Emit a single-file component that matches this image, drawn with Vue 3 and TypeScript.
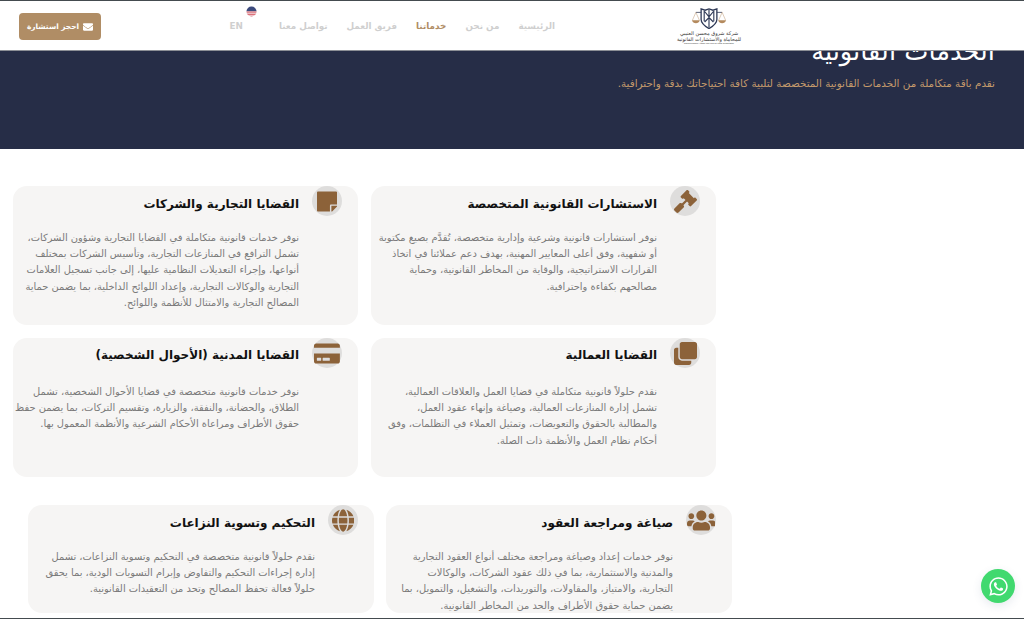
<template>
  <div class="page" dir="rtl">
    <header class="topbar">
      <div class="logo">
        <svg class="logo-mark" viewBox="0 0 40 24" aria-hidden="true">
          <path d="M5 5h30" stroke="#2f3a57" stroke-width=".9" fill="none" />
          <path d="M1 14l4-9 4 9M31 14l4-9 4 9" stroke="#b48a5e" stroke-width=".5" fill="none" />
          <path d="M.5 14h9c-1 4.5-8 4.5-9 0zM30.500 14h9c-1 4.500-8 4.500-9 0z" fill="#b48a5e" />
          <path d="M11 1l4.500 1.500L20 1l4.500 1.500L29 1v12c0 5-5 8-9 10.500C16 21 11 18 11 13z" fill="#fff" stroke="#2f3a57" stroke-width="1.500" />
          <path d="M14.500 3v12M25.500 3v12M20 2v20M15 4l5 6 5-6M15 16l5-5 5 5" stroke="#2f3a57" stroke-width="1.300" fill="none" />
        </svg>
        <span class="logo-line">شركة شروق محسن العنيبي</span>
        <span class="logo-line">للمحاماة والاستشارات القانونية</span>
        <span class="logo-tiny" dir="ltr">Shrouq Mohsen Alotaibi Law Firm for Legal Consultation</span>
      </div>
      <nav class="nav">
        <a v-for="link in links" :key="link.label" class="nav-link" :class="{ active: link.active }">{{ link.label }}</a>
        <a class="nav-link lang" dir="ltr">
          EN
          <svg class="flag" viewBox="0 0 12 12" aria-hidden="true">
            <clipPath id="flagClip"><circle cx="6" cy="6" r="5.5" /></clipPath>
            <g clip-path="url(#flagClip)">
              <rect width="12" height="12" fill="#f4f1f1" />
              <rect y="6" width="12" height="1.2" fill="#d8525f" />
              <rect y="8.4" width="12" height="1.2" fill="#d8525f" />
              <rect y="10.6" width="12" height="1.2" fill="#d8525f" />
              <rect width="12" height="5.6" fill="#3b4a7d" />
            </g>
          </svg>
        </a>
      </nav>
      <a class="cta">
        <svg class="cta-icon" viewBox="0 0 512 512" aria-hidden="true">
          <path d="M502.3 190.8c3.9-3.1 9.7-.2 9.7 4.7V400c0 26.5-21.5 48-48 48H48c-26.5 0-48-21.5-48-48V195.6c0-5 5.7-7.8 9.7-4.7 22.4 17.4 52.1 39.5 154.1 113.6 21.1 15.4 56.7 47.8 92.2 47.6 35.7.3 72-32.8 92.3-47.6 102-74.1 131.6-96.3 154-113.7zM256 320c23.2.4 56.6-29.2 73.4-41.4 132.7-96.3 142.8-104.7 173.4-128.7 5.8-4.5 9.2-11.5 9.2-18.9v-19c0-26.5-21.5-48-48-48H48C21.5 64 0 85.5 0 112v19c0 7.4 3.4 14.3 9.2 18.9 30.6 23.9 40.7 32.4 173.4 128.7 16.8 12.2 50.2 41.8 73.4 41.4z" />
        </svg>
        احجز استشارة
      </a>
    </header>

    <section class="hero">
      <h1>الخدمات القانونية</h1>
      <p>نقدم باقة متكاملة من الخدمات القانونية المتخصصة لتلبية كافة احتياجاتك بدقة واحترافية.</p>
    </section>

    <main class="services">
      <div v-for="(row, r) in rows" :key="r" class="row" :class="`row-${r + 1}`">
        <article v-for="card in row" :key="card.title" class="card">
          <div class="card-head">
            <span class="icon-wrap">
              <svg class="icon" :viewBox="card.box" aria-hidden="true"><path :d="card.icon" /></svg>
            </span>
            <h3>{{ card.title }}</h3>
          </div>
          <p class="card-text">
            <span v-for="line in card.lines" :key="line">{{ line }}</span>
          </p>
        </article>
      </div>
    </main>

    <a class="whatsapp">
      <svg viewBox="0 0 448 512" aria-hidden="true">
        <path d="M380.9 97.1C339 55.1 283.2 32 223.9 32c-122.4 0-222 99.6-222 222 0 39.1 10.2 77.3 29.6 111L0 480l117.7-30.9c32.4 17.7 68.9 27 106.1 27h.1c122.3 0 224.1-99.6 224.1-222 0-59.3-25.2-115-67.1-157zm-157 341.6c-33.2 0-65.7-8.9-94-25.7l-6.7-4-69.8 18.3L72 359.2l-4.4-7c-18.5-29.4-28.2-63.3-28.2-98.2 0-101.7 82.8-184.5 184.6-184.5 49.3 0 95.6 19.2 130.4 54.1 34.8 34.9 56.2 81.2 56.1 130.5 0 101.8-84.9 184.6-186.6 184.6zm101.2-138.2c-5.5-2.8-32.8-16.2-37.9-18-5.1-1.9-8.8-2.8-12.5 2.8-3.7 5.6-14.3 18-17.6 21.8-3.2 3.7-6.5 4.2-12 1.4-32.6-16.3-54-29.1-75.5-66-5.7-9.8 5.7-9.1 16.3-30.3 1.8-3.7.9-6.9-.5-9.7-1.4-2.8-12.5-30.1-17.1-41.2-4.5-10.8-9.1-9.3-12.5-9.5-3.2-.2-6.9-.2-10.6-.2-3.7 0-9.7 1.4-14.8 6.9-5.1 5.6-19.4 19-19.4 46.3 0 27.3 19.9 53.7 22.6 57.4 2.8 3.7 39.1 59.7 94.8 83.8 35.2 15.2 49 16.5 66.6 13.9 10.7-1.6 32.8-13.4 37.4-26.4 4.6-13 4.6-24.1 3.2-26.4-1.3-2.5-5-3.9-10.5-6.6z" />
      </svg>
    </a>
  </div>
</template>

<script setup lang="ts">
interface Card {
  title: string;
  box: string;
  icon: string;
  lines: string[];
}

const links = [
  { label: 'الرئيسية', active: false },
  { label: 'من نحن', active: false },
  { label: 'خدماتنا', active: true },
  { label: 'فريق العمل', active: false },
  { label: 'تواصل معنا', active: false },
];

const gavel = 'M504.971 199.362l-22.627-22.627c-9.373-9.373-24.569-9.373-33.941 0l-5.657 5.657L329.608 69.255l5.657-5.657c9.373-9.373 9.373-24.569 0-33.941L312.638 7.029c-9.373-9.373-24.569-9.373-33.941 0L154.246 131.48c-9.373 9.373-9.373 24.569 0 33.941l22.627 22.627c9.373 9.373 24.569 9.373 33.941 0l5.657-5.657 39.598 39.598-81.04 81.04-5.657-5.657c-12.497-12.497-32.758-12.497-45.255 0L9.373 412.118c-12.497 12.497-12.497 32.758 0 45.255l45.255 45.255c12.497 12.497 32.758 12.497 45.255 0l114.745-114.745c12.497-12.497 12.497-32.758 0-45.255l-5.657-5.657 81.04-81.04 39.598 39.598-5.657 5.657c-9.373 9.373-9.373 24.569 0 33.941l22.627 22.627c9.373 9.373 24.569 9.373 33.941 0l124.451-124.451c9.372-9.372 9.372-24.568 0-33.941z';
const note = 'M312 320h136V56c0-13.3-10.7-24-24-24H24C10.7 32 0 42.7 0 56v400c0 13.3 10.7 24 24 24h264V344c0-13.2 10.8-24 24-24zm129 55l-98 98c-4.5 4.5-10.6 7-17 7h-6V352h128v6.1c0 6.3-2.5 12.4-7 16.9z';
const clone = 'M464 0c26.51 0 48 21.49 48 48v288c0 26.51-21.49 48-48 48H176c-26.51 0-48-21.49-48-48V48c0-26.51 21.49-48 48-48h288M176 416c-44.112 0-80-35.888-80-80V128H48c-26.51 0-48 21.49-48 48v288c0 26.51 21.49 48 48 48h288c26.51 0 48-21.49 48-48v-48H176z';
const creditCard = 'M0 432c0 26.5 21.5 48 48 48h480c26.5 0 48-21.5 48-48V256H0v176zm192-68c0-6.6 5.4-12 12-12h136c6.6 0 12 5.4 12 12v40c0 6.6-5.4 12-12 12H204c-6.6 0-12-5.4-12-12v-40zm-128 0c0-6.6 5.4-12 12-12h72c6.6 0 12 5.4 12 12v40c0 6.6-5.4 12-12 12H76c-6.6 0-12-5.4-12-12v-40zM576 80v48H0V80c0-26.5 21.5-48 48-48h480c26.5 0 48 21.5 48 48z';
const users = 'M96 224c35.3 0 64-28.7 64-64s-28.7-64-64-64-64 28.7-64 64 28.7 64 64 64zm448 0c35.3 0 64-28.7 64-64s-28.7-64-64-64-64 28.7-64 64 28.7 64 64 64zm32 32h-64c-17.6 0-33.5 7.1-45.1 18.6 40.3 22.1 68.9 62 75.1 109.4h66c17.7 0 32-14.3 32-32v-32c0-35.3-28.7-64-64-64zm-256 0c61.9 0 112-50.1 112-112S381.9 32 320 32 208 82.1 208 144s50.1 112 112 112zm76.8 32h-8.3c-20.8 10-43.9 16-68.5 16s-47.6-6-68.5-16h-8.3C179.6 288 128 339.6 128 403.2V432c0 26.5 21.5 48 48 48h288c26.5 0 48-21.5 48-48v-28.8c0-63.6-51.6-115.2-115.2-115.2zm-223.7-13.4C161.5 263.1 145.6 256 128 256H64c-35.3 0-64 28.7-64 64v32c0 17.7 14.3 32 32 32h65.9c6.3-47.4 34.9-87.3 75.2-109.4z';
const globe = 'M336.5 160C322 70.7 287.8 8 248 8s-74 62.7-88.5 152h177zM152 256c0 22.2 1.2 43.5 3.3 64h185.3c2.1-20.5 3.3-41.8 3.3-64s-1.2-43.5-3.3-64H155.3c-2.1 20.5-3.3 41.8-3.3 64zm324.7-96c-28.6-67.9-86.5-120.4-158-141.6 24.4 33.8 41.2 84.7 50 141.6h108zM177.2 18.4C105.8 39.6 47.8 92.1 19.3 160h108c8.7-56.9 25.5-107.8 49.9-141.6zM487.4 192H372.7c2.1 21 3.3 42.5 3.3 64s-1.2 43-3.3 64h114.6c5.5-20.5 8.6-41.8 8.6-64s-3.1-43.5-8.5-64zM120 256c0-21.5 1.2-43 3.3-64H8.6C3.2 212.5 0 233.8 0 256s3.2 43.5 8.6 64h114.6c-2-21-3.2-42.5-3.2-64zm39.5 96c14.5 89.3 48.7 152 88.5 152s74-62.7 88.5-152h-177zm159.3 141.6c71.4-21.2 129.4-73.7 158-141.6h-108c-8.8 56.9-25.6 107.8-50 141.6zM19.3 352c28.6 67.9 86.5 120.4 158 141.6-24.4-33.8-41.2-84.7-50-141.6h-108z';

const rows: Card[][] = [
  [
    {
      title: 'الاستشارات القانونية المتخصصة',
      box: '0 0 512 512',
      icon: gavel,
      lines: [
        'نوفر استشارات قانونية وشرعية وإدارية متخصصة، تُقدَّم بصيغ مكتوبة',
        'أو شفهية، وفق أعلى المعايير المهنية، بهدف دعم عملائنا في اتخاذ',
        'القرارات الاستراتيجية، والوقاية من المخاطر القانونية، وحماية',
        'مصالحهم بكفاءة واحترافية.',
      ],
    },
    {
      title: 'القضايا التجارية والشركات',
      box: '0 0 448 512',
      icon: note,
      lines: [
        'نوفر خدمات قانونية متكاملة في القضايا التجارية وشؤون الشركات،',
        'تشمل الترافع في المنازعات التجارية، وتأسيس الشركات بمختلف',
        'أنواعها، وإجراء التعديلات النظامية عليها، إلى جانب تسجيل العلامات',
        'التجارية والوكالات التجارية، وإعداد اللوائح الداخلية، بما يضمن حماية',
        'المصالح التجارية والامتثال للأنظمة واللوائح.',
      ],
    },
  ],
  [
    {
      title: 'القضايا العمالية',
      box: '0 0 512 512',
      icon: clone,
      lines: [
        'نقدم حلولاً قانونية متكاملة في قضايا العمل والعلاقات العمالية،',
        'تشمل إدارة المنازعات العمالية، وصياغة وإنهاء عقود العمل،',
        'والمطالبة بالحقوق والتعويضات، وتمثيل العملاء في التظلمات، وفق',
        'أحكام نظام العمل والأنظمة ذات الصلة.',
      ],
    },
    {
      title: 'القضايا المدنية (الأحوال الشخصية)',
      box: '0 0 576 512',
      icon: creditCard,
      lines: [
        'نوفر خدمات قانونية متخصصة في قضايا الأحوال الشخصية، تشمل',
        'الطلاق، والحضانة، والنفقة، والزيارة، وتقسيم التركات، بما يضمن حفظ',
        'حقوق الأطراف ومراعاة الأحكام الشرعية والأنظمة المعمول بها.',
      ],
    },
  ],
  [
    {
      title: 'صياغة ومراجعة العقود',
      box: '0 0 640 512',
      icon: users,
      lines: [
        'نوفر خدمات إعداد وصياغة ومراجعة مختلف أنواع العقود التجارية',
        'والمدنية والاستثمارية، بما في ذلك عقود الشركات، والوكالات',
        'التجارية، والامتياز، والمقاولات، والتوريدات، والتشغيل، والتمويل، بما',
        'يضمن حماية حقوق الأطراف والحد من المخاطر القانونية.',
      ],
    },
    {
      title: 'التحكيم وتسوية النزاعات',
      box: '0 0 496 512',
      icon: globe,
      lines: [
        'نقدم حلولاً قانونية متخصصة في التحكيم وتسوية النزاعات، تشمل',
        'إدارة إجراءات التحكيم والتفاوض وإبرام التسويات الودية، بما يحقق',
        'حلولاً فعالة تحفظ المصالح وتحد من التعقيدات القانونية.',
      ],
    },
  ],
];
</script>

<style>
html,
body {
  margin: 0;
  height: 619px;
  overflow: hidden;
  background: #fff;
}
</style>

<style scoped>
.page {
  position: relative;
  height: 619px;
  overflow: hidden;
  background: #fff;
  box-sizing: border-box;
  border-top: 1px solid #444b4f;
  border-bottom: 1px solid #444b4f;
  font-family: "DejaVu Sans", "Noto Sans", sans-serif;
}

.topbar {
  position: absolute;
  top: 0;
  left: 0;
  right: 0;
  height: 50px;
  box-sizing: border-box;
  display: flex;
  align-items: center;
  padding: 0 284px 0 19px;
  background: #fff;
  border-bottom: 1px solid #8c8f96;
  z-index: 5;
}

.logo {
  width: 62px;
  display: flex;
  flex-direction: column;
  align-items: center;
  margin-top: 2px;
  color: #333;
  white-space: nowrap;
}

.logo-mark {
  width: 38px;
  height: 21px;
  margin-bottom: 1px;
}

.logo-line {
  font-size: 5px;
  line-height: 6px;
}

.logo-tiny {
  font-size: 2px;
  line-height: 3px;
  font-family: "Liberation Sans", sans-serif;
}

.nav {
  display: flex;
  align-items: center;
  gap: 19px;
  margin-right: 123px;
}

.nav-link {
  font-size: 8.8px;
  font-weight: 700;
  color: #cfcfcf;
  white-space: nowrap;
}

.nav-link.active {
  color: #b08d65;
}

.lang {
  position: relative;
  margin-right: 17px;
}

.flag {
  position: absolute;
  top: -15px;
  left: 16px;
  width: 11px;
  height: 11px;
}

.cta {
  margin-right: auto;
  width: 82px;
  height: 27px;
  margin-top: 2px;
  display: flex;
  align-items: center;
  justify-content: center;
  gap: 4px;
  border-radius: 4px;
  background: #b08d65;
  color: #fff;
  font-size: 7.4px;
  font-weight: 700;
  white-space: nowrap;
}

.cta-icon {
  width: 10px;
  height: 10px;
  fill: #fff;
}

.hero {
  height: 148px;
  box-sizing: border-box;
  padding: 34px 29px 0 0;
  background: #262d47;
}

.hero h1 {
  margin: 0;
  font-size: 25.7px;
  line-height: 32px;
  font-weight: 400;
  color: #fff;
}

.hero p {
  margin: 8px 0 0;
  font-size: 10.4px;
  line-height: 16px;
  color: #c49a6c;
}

.services {
  padding-top: 37px;
}

.row {
  display: flex;
  gap: 13px;
  margin-bottom: 13px;
  padding-right: 308px;
}

.row-2 {
  margin-bottom: 28px;
}

.row-3 {
  gap: 12px;
  padding-right: 292px;
}

.card {
  width: 345px;
  height: 139px;
  box-sizing: border-box;
  padding-right: 16px;
  border-radius: 14px;
  background: #f6f5f4;
}

.row-3 .card {
  width: 346px;
  height: 108px;
}

.card-head {
  display: flex;
  align-items: center;
  gap: 13px;
}

.icon-wrap {
  flex: none;
  width: 30px;
  height: 30px;
  border-radius: 50%;
  background: #dedddc;
  display: flex;
  align-items: center;
  justify-content: center;
}

.icon {
  flex: none;
  height: 23px;
  width: auto;
  fill: #8c6239;
}

.card h3 {
  margin: 5px 0 0;
  font-size: 12px;
  font-weight: 700;
  color: #111;
  white-space: nowrap;
}

.row-2 .card h3 {
  margin-top: 3px;
}

.card-text {
  margin: 14px 43px 0 0;
  font-size: 9.9px;
  line-height: 16.2px;
  color: #7a7a7a;
}

.row-2 .card-text {
  margin-top: 16px;
}

.card-text span {
  display: block;
  white-space: nowrap;
}

.whatsapp {
  position: absolute;
  left: 981px;
  top: 568px;
  width: 34px;
  height: 34px;
  border-radius: 50%;
  background: #41d96f;
  box-shadow: 0 3px 10px rgba(60, 80, 120, 0.12);
  display: flex;
  align-items: center;
  justify-content: center;
}

.whatsapp svg {
  width: 21px;
  height: 21px;
  fill: #fff;
}
</style>
